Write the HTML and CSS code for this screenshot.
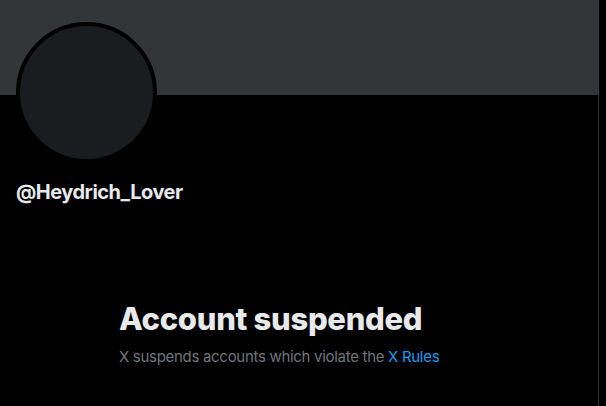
FILE: index.html
```html
<!DOCTYPE html>
<html lang="en">
<head>
<meta charset="utf-8">
<title>@Heydrich_Lover</title>
<link rel="stylesheet" href="styles.css">
</head>
<body>
<main class="column">
  <div class="banner"></div>
  <section class="profile">
    <div class="avatar"></div>
    <div class="handle">@Heydrich_Lover</div>
  </section>
  <section class="empty">
    <h1 class="empty-title">Account suspended</h1>
    <p class="empty-text">X suspends accounts which violate the <a class="link" href="#">X Rules</a></p>
  </section>
</main>
</body>
</html>
```
FILE: styles.css
```css
html, body {
  margin: 0;
  padding: 0;
  background: #000;
  height: 100%;
}
body {
  font-family: Inter, Roboto, "Liberation Sans", sans-serif;
  color: #e7e9ea;
  overflow: hidden;
}
.column {
  width: 598px;
  min-height: 100%;
  border-right: 1px solid #2f3336;
  box-sizing: content-box;
}
.banner {
  height: 95px;
  background: #333639;
  margin-right: -1px;
}
.profile {
  padding: 0 16px;
}
.avatar {
  width: 133px;
  height: 133px;
  border: 4px solid #000;
  border-radius: 50%;
  background: #1b1c1f;
  margin-top: -73px;
}
.handle {
  margin-top: 17px;
  font-size: 20px;
  line-height: 24px;
  font-weight: 700;
  letter-spacing: -0.5px;
  color: #e7e9ea;
}
.empty {
  max-width: 360px;
  margin: 0 auto;
  padding: 0 20px;
  padding-top: 97px;
}
.empty-title {
  margin: 0;
  font-size: 31px;
  line-height: 36px;
  font-weight: 800;
  letter-spacing: -0.3px;
  color: #e7e9ea;
}
.empty-text {
  margin: 10px 0 0;
  font-size: 15px;
  line-height: 20px;
  letter-spacing: -0.3px;
  color: #71767b;
}
.link {
  color: #1d9bf0;
  text-decoration: none;
}
```
